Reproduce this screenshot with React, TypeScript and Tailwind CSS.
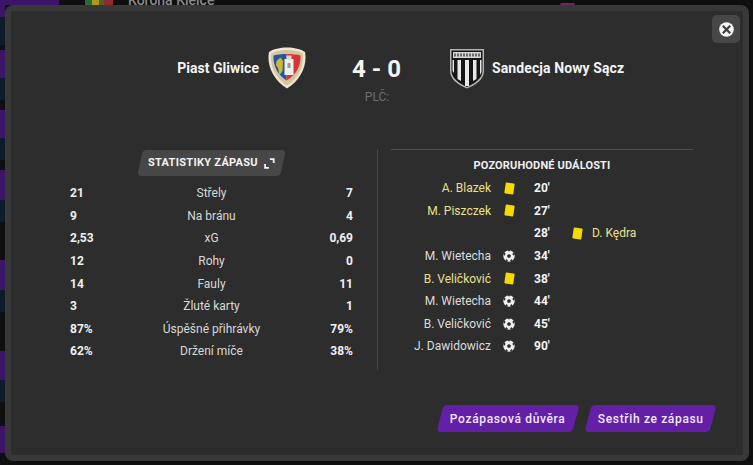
const stats = [
  { home: "21", label: "Střely", away: "7" },
  { home: "9", label: "Na bránu", away: "4" },
  { home: "2,53", label: "xG", away: "0,69" },
  { home: "12", label: "Rohy", away: "0" },
  { home: "14", label: "Fauly", away: "11" },
  { home: "3", label: "Žluté karty", away: "1" },
  { home: "87%", label: "Úspěšné přihrávky", away: "79%" },
  { home: "62%", label: "Držení míče", away: "38%" },
];

type MatchEvent = {
  minute: string;
  player: string;
  kind: "card" | "goal";
  side: "home" | "away";
};

const events: MatchEvent[] = [
  { minute: "20'", player: "A. Blazek", kind: "card", side: "home" },
  { minute: "27'", player: "M. Piszczek", kind: "card", side: "home" },
  { minute: "28'", player: "D. Kędra", kind: "card", side: "away" },
  { minute: "34'", player: "M. Wietecha", kind: "goal", side: "home" },
  { minute: "38'", player: "B. Veličković", kind: "card", side: "home" },
  { minute: "44'", player: "M. Wietecha", kind: "goal", side: "home" },
  { minute: "45'", player: "B. Veličković", kind: "goal", side: "home" },
  { minute: "90'", player: "J. Dawidowicz", kind: "goal", side: "home" },
];

// slivers of the page behind the dialog, down the left edge
const stripes = [
  "mt-[5px] h-[12px] bg-[#3c1468]",
  "mt-[0px] h-[28px] bg-[#0c1c2a]",
  "mt-[5px] h-[28px] bg-[#3c1468]",
  "mt-[0px] h-[22px] bg-[#0c1c2a]",
  "mt-[10px] h-[28px] bg-[#3c1468]",
  "mt-[0px] h-[22px] bg-[#0c1c2a]",
  "mt-[10px] h-[30px] bg-[#3c1468]",
  "mt-[0px] h-[22px] bg-[#0c1c2a]",
  "mt-[38px] h-[30px] bg-[#3c1468]",
  "mt-[0px] h-[22px] bg-[#0c1c2a]",
  "mt-[39px] h-[29px] bg-[#3c1468]",
  "mt-[0px] h-[22px] bg-[#0c1c2a]",
  "mt-[24px] h-[27px] bg-[#3c1468]",
];

function PiastCrest() {
  return (
    <svg width="40" height="42" viewBox="0 0 40 42">
      <path d="M20 .5C27 .5 34 2 38 5 40.500 18 34 33 20 41.500 6 33-.5 18 2 5 6 2 13 .5 20 .5Z" fill="#efe6d0" />
      <path d="M20 3C26 3 32 4.200 35.800 6.500 37.500 18 32 31 20 38.500 8 31 2.500 18 4.200 6.500 8 4.200 14 3 20 3Z" fill="#d6c49c" />
      <path d="M6.500 8.500C10 7.500 15 7 19.500 7V33.500C11 28 5.800 19 6.500 8.500Z" fill="#1f56a8" />
      <path d="M19.500 7C25 7 30 7.500 33.500 8.500 34.200 19 29 28 19.500 33.500Z" fill="#d8323c" />
      <path d="M9.500 14 13.500 10.500 16 14 15.500 24 12.500 28 11 21 9 18Z" fill="#d2b72c" />
      <rect x="17.500" y="12" width="9" height="16" fill="#eeeeea" />
      <rect x="19.500" y="8.500" width="5" height="4" fill="#d8d8d0" />
      <rect x="20.500" y="16" width="3" height="5" fill="#9a9a94" />
    </svg>
  );
}

function SandecjaCrest() {
  return (
    <svg width="36" height="41" viewBox="0 0 36 41">
      <path d="M1 1H35V23C35 31 27 37 18 40.500 9 37 1 31 1 23Z" fill="#b5b5b5" />
      <path d="M2.500 2.500H33.500V23C33.500 30 26 35.500 18 39 10 35.500 2.500 30 2.500 23Z" fill="#161616" />
      <rect x="4" y="4" width="28" height="6" fill="#d6d6d6" />
      <path d="M6 5.500V8.500M9 5.500V8.500M12 5.500V8.500M15 5.500V8.500M18 5.500V8.500M21 5.500V8.500M24 5.500V8.500M27 5.500V8.500M30 5.500V8.500" stroke="#222" strokeWidth="1.200" />
      <path d="M8.500 12H12V33L8.500 31ZM16 12H20V38H16ZM24 12H27.500V31L24 33ZM3.500 12H5V25L3.500 23ZM31 12H32.500V24L31 27Z" fill="#e8e8e8" />
    </svg>
  );
}

function CloseIcon() {
  return (
    <svg width="15" height="15" viewBox="0 0 15 15">
      <circle cx="7.500" cy="7.500" r="7.300" fill="#f5f5f5" />
      <path d="M3.800 3.800 11.200 11.200M11.200 3.800 3.800 11.200" stroke="#3e3e3e" strokeWidth="2.200" />
    </svg>
  );
}

function ExpandIcon() {
  return (
    <svg width="11" height="11" viewBox="0 0 11 11" fill="none" stroke="#f2f2f2" strokeWidth="1.800">
      <path d="M6 1.200H9.800V5M5 9.800H1.200V6" />
    </svg>
  );
}

function YellowCard() {
  return <span className="block h-[11px] w-[9px] rotate-[8deg] rounded-[1px] bg-[#f7d900]" />;
}

function Ball() {
  return (
    <svg width="12" height="12" viewBox="0 0 12 12">
      <circle cx="6" cy="6" r="5.700" fill="#f0f0f0" />
      <path d="M6 4 8 5.400 7.200 7.700H4.800L4 5.400Z" fill="#2d2d2d" />
      <path d="M4.300 .6 6 1.600 7.700 .6 6 0ZM.4 4.600 1.900 5.800 2.500 3.400 1.400 2.400ZM11.600 4.600 10.100 5.800 9.500 3.400 10.600 2.400ZM2.600 10.600 3.400 9 5 10.700 4 11.500ZM9.400 10.600 8.600 9 7 10.700 8 11.500Z" fill="#2d2d2d" />
    </svg>
  );
}

function EventIcon({ kind }: { kind: MatchEvent["kind"] }) {
  return kind === "card" ? <YellowCard /> : <Ball />;
}

function Action({ label, width }: { label: string; width: string }) {
  return (
    <button className={`flex h-[27px] ${width} -skew-x-[15deg] items-center justify-center rounded-[4px] bg-[#631fa5]`}>
      <span className="skew-x-[15deg] text-[12px] font-medium tracking-[0.65px] text-[#f1e9fb]">{label}</span>
    </button>
  );
}

export default function App() {
  return (
    <div className="relative h-[465px] w-[753px] overflow-hidden bg-[#0f0f0f] font-['Roboto',sans-serif]">
      <div className="flex w-[5px] flex-col">
        {stripes.map((s, i) => (
          <div key={i} className={s} />
        ))}
      </div>
      <div className="absolute left-0 top-0 h-[5px] w-[59px] bg-[#3c1468]" />
      <div className="absolute left-[85px] top-0 flex h-[5px] w-[28px]">
        <div className="w-[7px] bg-[#2c6b34]" />
        <div className="w-[7px] bg-[#a99a22]" />
        <div className="w-[5px] bg-[#5c5a2a]" />
        <div className="w-[9px] bg-[#8c2c30]" />
      </div>
      <div className="absolute left-[560px] top-[3px] h-[2px] w-[15px] rounded-t-full bg-[#6a2a5c]" />
      <div className="absolute left-[128px] top-[-8px] text-[14px] font-medium leading-[16px] text-[#8b8b8b]">Korona Kielce</div>

      <div className="absolute left-[5px] top-[5px] h-[456px] w-[744px] rounded-[8px] border-[6px] border-[#383838] bg-[#2d2d2d]">
        <button className="absolute right-[3px] top-[4px] flex h-[28px] w-[28px] items-center justify-center rounded-[5px] bg-[#474747]">
          <CloseIcon />
        </button>

        <div className="grid grid-cols-[1fr_80px_1fr] pt-[36px]">
          <div className="flex h-[42px] items-center justify-end gap-[8px] pr-[30px]">
            <span className="text-[14px] font-bold tracking-[0.03px] text-[#f4f4f4]">Piast Gliwice</span>
            <PiastCrest />
          </div>
          <div className="flex flex-col items-center pt-[7px]">
            <span className="ml-[-1px] text-[24px] font-bold leading-[30px] text-[#f4f4f4]">4 - 0</span>
            <span className="mt-[6px] text-[12px] leading-[14px] text-[#6f6f6f]">PLČ:</span>
          </div>
          <div className="flex h-[42px] items-center gap-[7px] pl-[32px]">
            <SandecjaCrest />
            <span className="text-[14px] font-bold tracking-[0.1px] text-[#f4f4f4]">Sandecja Nowy Sącz</span>
          </div>
        </div>

        <div className="mt-[45px] flex h-[221px] pl-[59px]">
          <div className="w-[283px] pt-px">
            <div className="flex justify-center">
              <div className="flex h-[26px] w-[143px] -skew-x-[12deg] items-center justify-center gap-[6px] rounded-[4px] bg-[#474747]">
                <span className="skew-x-[12deg] text-[11px] font-bold tracking-[0.3px] text-[#f4f4f4]">STATISTIKY ZÁPASU</span>
                <span className="skew-x-[12deg]"><ExpandIcon /></span>
              </div>
            </div>
            <div className="mt-[6px]">
              {stats.map((s) => (
                <div key={s.label} className="flex h-[22.6px] items-center justify-between text-[12px]">
                  <span className="w-[50px] font-bold text-[#f1f1f1]">{s.home}</span>
                  <span className="text-[#d8d8d8]">{s.label}</span>
                  <span className="w-[50px] text-right font-bold text-[#f1f1f1]">{s.away}</span>
                </div>
              ))}
            </div>
          </div>

          <div className="ml-[24px] h-full w-px bg-[#474747]" />

          <div className="ml-[13px] w-[302px] border-t border-[#505050]">
            <div className="mt-[9px] text-center text-[11px] font-bold leading-[14px] tracking-[0.15px] text-[#f0f0f0]">POZORUHODNÉ UDÁLOSTI</div>
            <div className="mt-[4px]">
              {events.map((e, i) => (
                <div key={i} className="grid h-[22.6px] grid-cols-[100px_8px_20px_34px_18px_12px_1fr] items-center text-[12px]">
                  <span className={`text-right ${e.kind === "card" ? "text-[#ebe08c]" : "text-[#dcdcdc]"}`}>{e.side === "home" ? e.player : ""}</span>
                  <span />
                  <span className="flex justify-center">{e.side === "home" && <EventIcon kind={e.kind} />}</span>
                  <span className="pl-[15px] font-bold text-[#f4f4f4]">{e.minute}</span>
                  <span />
                  <span className="flex justify-center">{e.side === "away" && <EventIcon kind={e.kind} />}</span>
                  <span className={`pl-[9px] ${e.kind === "card" ? "text-[#ebe08c]" : "text-[#dcdcdc]"}`}>{e.side === "away" ? e.player : ""}</span>
                </div>
              ))}
            </div>
          </div>
        </div>

        <div className="mt-[35px] flex justify-end gap-[12px] pr-[30px]">
          <Action label="Pozápasová důvěra" width="w-[136px]" />
          <Action label="Sestřih ze zápasu" width="w-[125px]" />
        </div>
      </div>
    </div>
  );
}
